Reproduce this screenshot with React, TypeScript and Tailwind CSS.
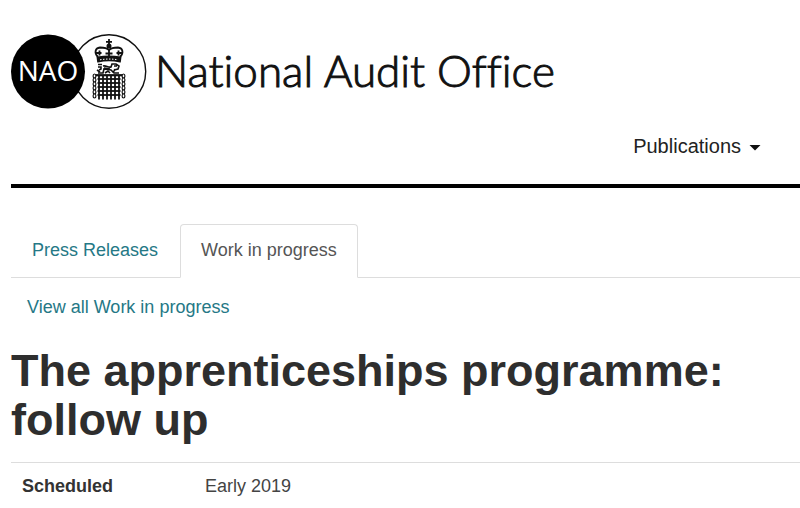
const TABS = [
  { label: "Press Releases", active: false },
  { label: "Work in progress", active: true },
];

const DETAILS = [{ name: "Scheduled", value: "Early 2019" }];

const GRATE_COLUMNS = [88, 92, 96, 100, 104, 108];
const GRATE_ROWS = [46, 50, 54, 58, 62];
const CHAIN_LINKS = [43, 47, 51, 55, 59, 63];

function Logo() {
  return (
    <svg className="h-[76px] w-[136px] shrink-0" viewBox="0 0 136 76" aria-hidden="true">
      <circle cx="98" cy="38.5" r="36.7" fill="#fff" stroke="#111" strokeWidth="1.4" />
      <circle cx="37" cy="38.5" r="37" fill="#000" />
      <text
        x="37"
        y="48"
        textAnchor="middle"
        fill="#fff"
        className="font-['Open_Sans','Noto_Sans',sans-serif] text-[28px]"
      >
        NAO
      </text>

      {/* crown */}
      <g fill="none" stroke="#111" strokeWidth="1.800">
        <path d="M98 6v7M95 8.800h6" />
        <circle cx="98" cy="13" r="1.600" fill="#111" />
        <path d="M87 24c-4-4-3-9 2-9.500 4 0 7 .5 9 2.500 2-2 5-2.500 9-2.500 5 .5 6 5.500 2 9.500" />
        <path d="M98 16v8" />
        <path d="M84.500 20h6M105.500 20h6M88.500 17.500v5M107.500 17.500v5M94.500 20.500h7" />
        <path d="M86.500 24.500c8-1.500 15-1.500 23 0l-.5 4c-7-1.500-15-1.500-22 0z" fill="#111" />
      </g>
      <path d="M89 26.800c6-1 12-1 18 0" fill="none" stroke="#fff" strokeWidth="1" strokeDasharray="1.500 1.500" />

      {/* lion */}
      <g fill="none" stroke="#111" strokeWidth="1.600">
        <path d="M87 31.500h4M87 34h3v2l-2 1M87 40h5l1-4 7 1 3 3h5M102 40l2-4" />
        <path d="M92 33c3-1 5 2 8 1l1-3h4l3 2-1 3-4 1M94 40l3-2 2 2M103 33h3" />
        <path d="M86 37l3 2M93 35l6 1" />
      </g>

      {/* portcullis */}
      <g stroke="#111" strokeWidth="1.800">
        {GRATE_COLUMNS.map((x) => (
          <path key={x} d={`M${x} 42v24.500`} />
        ))}
        {GRATE_ROWS.map((y) => (
          <path key={y} d={`M86.500 ${y}h23`} />
        ))}
        <path d="M84 42.200h28" strokeWidth="2.200" />
      </g>
      <g fill="#fff" stroke="#111" strokeWidth="1.200">
        {CHAIN_LINKS.map((y) => (
          <ellipse key={`l${y}`} cx="83.500" cy={y} rx="1.400" ry="2" />
        ))}
        {CHAIN_LINKS.map((y) => (
          <ellipse key={`r${y}`} cx="112.500" cy={y} rx="1.400" ry="2" />
        ))}
      </g>
    </svg>
  );
}

function Header() {
  return (
    <header className="border-b-4 border-black pt-[33px]">
      <a href="#" className="flex items-center gap-2 text-[#111]">
        <Logo />
        <span className="pb-0.5 whitespace-nowrap font-['Lato','Open_Sans',sans-serif] text-[44px] leading-[74px] font-light [-webkit-text-stroke:1px_#111] [font-variant-ligatures:none]">
          National Audit Office
        </span>
      </a>
      <nav className="flex justify-end pt-[22px] pr-[39px] pb-[23px]">
        <button type="button" className="flex items-center gap-2 text-xl leading-[30px] text-[#222]">
          Publications
          <svg className="mt-1 h-[6px] w-3" viewBox="0 0 12 6" aria-hidden="true">
            <path d="M0.500 0h11L6 5.500z" fill="#111" />
          </svg>
        </button>
      </nav>
    </header>
  );
}

function Tabs() {
  return (
    <nav className="mt-9 flex border-b border-[#ddd]">
      {TABS.map((tab) => (
        <a
          key={tab.label}
          href="#"
          aria-current={tab.active ? "page" : undefined}
          className={
            tab.active
              ? "-mb-px rounded-t border border-[#ddd] border-b-white px-5 py-3 leading-[27px] text-[#555]"
              : "mr-px border border-transparent px-5 py-3 leading-[27px] text-[#257886]"
          }
        >
          {tab.label}
        </a>
      ))}
    </nav>
  );
}

export default function App() {
  return (
    <div className="min-h-screen bg-white pl-[11px] font-['Liberation_Sans',Arial,sans-serif] text-lg text-[#333]">
      <Header />
      <main>
        <Tabs />
        <a href="#" className="mt-4 ml-4 inline-block leading-[27px] text-[#257886]">
          View all Work in progress
        </a>
        <h1 className="mt-[25px] max-w-[760px] text-[45px] leading-[49px] font-bold text-[#2e2e2e]">
          The apprenticeships programme: follow up
        </h1>
        <table className="mt-[18px] w-full border-t border-[#ddd] text-left">
          <tbody>
            {DETAILS.map((row) => (
              <tr key={row.name}>
                <th scope="row" className="w-[183px] px-[11px] pt-[10px] pb-2 leading-[27px] font-bold">
                  {row.name}
                </th>
                <td className="px-[11px] pt-[10px] pb-2 leading-[27px] text-[#444]">{row.value}</td>
              </tr>
            ))}
          </tbody>
        </table>
      </main>
    </div>
  );
}
